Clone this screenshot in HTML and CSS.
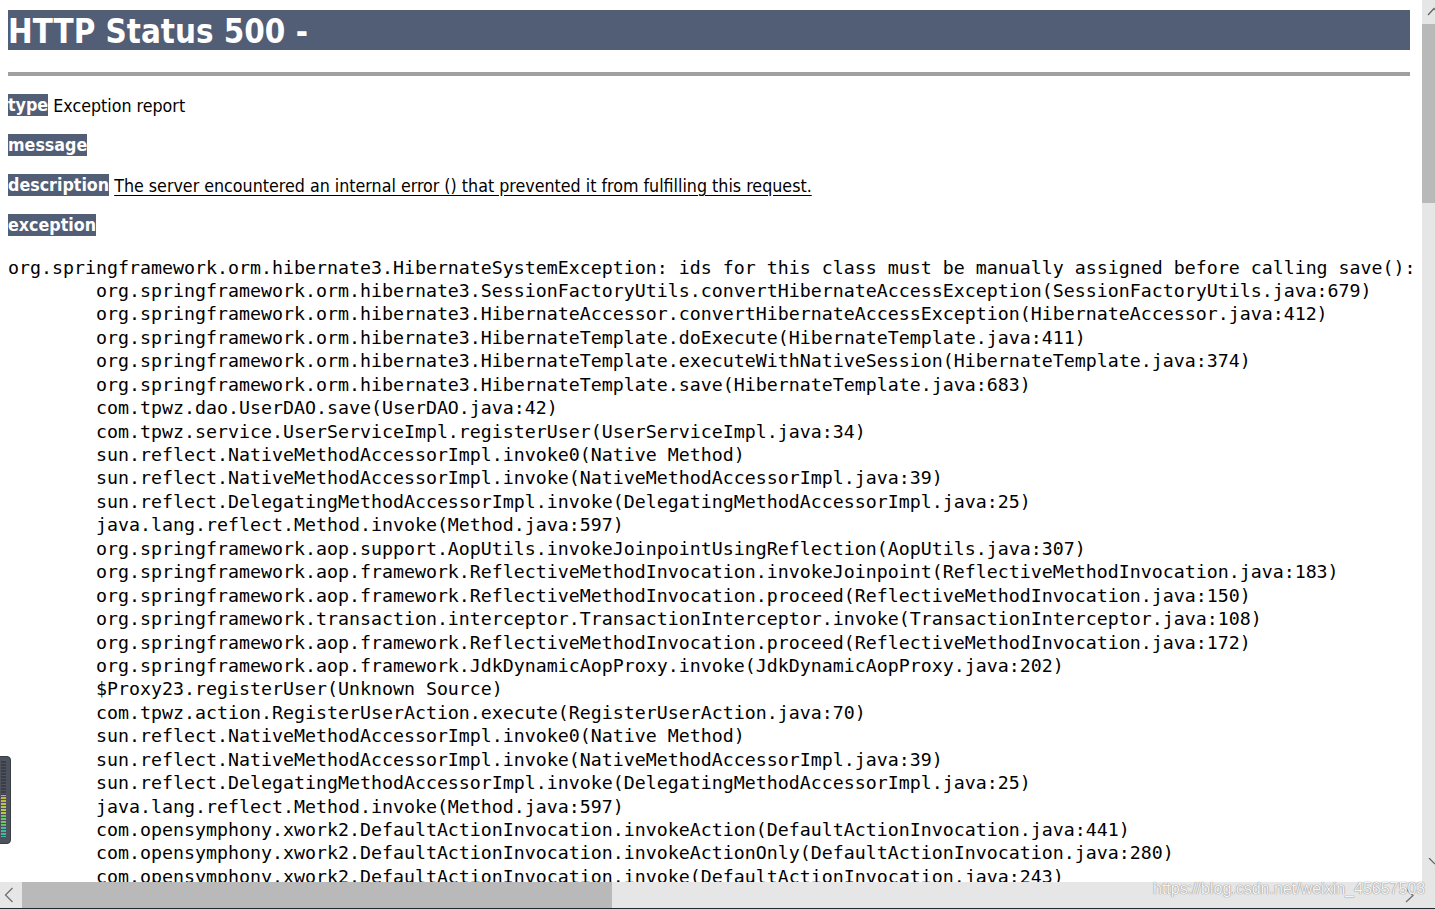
FILE: index.html
```html
<!DOCTYPE html>
<html>
<head>
<meta charset="utf-8">
<title>Apache Tomcat - Error report</title>
<link rel="stylesheet" href="styles.css">
</head>
<body>
<div class="screen">
  <div class="viewport">
    <h1 class="title">HTTP Status 500 - </h1>
    <hr class="rule">
    <p class="row"><b class="label">type</b> Exception report</p>
    <p class="row"><b class="label">message</b> <u></u></p>
    <p class="row"><b class="label">description</b> <u class="desc">The server encountered an internal error () that prevented it from fulfilling this request.</u></p>
    <p class="row"><b class="label">exception</b></p>
<pre class="trace">org.springframework.orm.hibernate3.HibernateSystemException: ids for this class must be manually assigned before calling save(): 
        org.springframework.orm.hibernate3.SessionFactoryUtils.convertHibernateAccessException(SessionFactoryUtils.java:679)
        org.springframework.orm.hibernate3.HibernateAccessor.convertHibernateAccessException(HibernateAccessor.java:412)
        org.springframework.orm.hibernate3.HibernateTemplate.doExecute(HibernateTemplate.java:411)
        org.springframework.orm.hibernate3.HibernateTemplate.executeWithNativeSession(HibernateTemplate.java:374)
        org.springframework.orm.hibernate3.HibernateTemplate.save(HibernateTemplate.java:683)
        com.tpwz.dao.UserDAO.save(UserDAO.java:42)
        com.tpwz.service.UserServiceImpl.registerUser(UserServiceImpl.java:34)
        sun.reflect.NativeMethodAccessorImpl.invoke0(Native Method)
        sun.reflect.NativeMethodAccessorImpl.invoke(NativeMethodAccessorImpl.java:39)
        sun.reflect.DelegatingMethodAccessorImpl.invoke(DelegatingMethodAccessorImpl.java:25)
        java.lang.reflect.Method.invoke(Method.java:597)
        org.springframework.aop.support.AopUtils.invokeJoinpointUsingReflection(AopUtils.java:307)
        org.springframework.aop.framework.ReflectiveMethodInvocation.invokeJoinpoint(ReflectiveMethodInvocation.java:183)
        org.springframework.aop.framework.ReflectiveMethodInvocation.proceed(ReflectiveMethodInvocation.java:150)
        org.springframework.transaction.interceptor.TransactionInterceptor.invoke(TransactionInterceptor.java:108)
        org.springframework.aop.framework.ReflectiveMethodInvocation.proceed(ReflectiveMethodInvocation.java:172)
        org.springframework.aop.framework.JdkDynamicAopProxy.invoke(JdkDynamicAopProxy.java:202)
        $Proxy23.registerUser(Unknown Source)
        com.tpwz.action.RegisterUserAction.execute(RegisterUserAction.java:70)
        sun.reflect.NativeMethodAccessorImpl.invoke0(Native Method)
        sun.reflect.NativeMethodAccessorImpl.invoke(NativeMethodAccessorImpl.java:39)
        sun.reflect.DelegatingMethodAccessorImpl.invoke(DelegatingMethodAccessorImpl.java:25)
        java.lang.reflect.Method.invoke(Method.java:597)
        com.opensymphony.xwork2.DefaultActionInvocation.invokeAction(DefaultActionInvocation.java:441)
        com.opensymphony.xwork2.DefaultActionInvocation.invokeActionOnly(DefaultActionInvocation.java:280)
        com.opensymphony.xwork2.DefaultActionInvocation.invoke(DefaultActionInvocation.java:243)
</pre>
  </div>
  <div class="vscroll">
    <svg class="arrow-up" width="13" height="24" viewBox="0 0 13 24"><path d="M6 15 L12 8.5 L18 15" fill="none" stroke="#606060" stroke-width="1.2"/></svg>
    <div class="vthumb"></div>
    <div class="vtrack"></div>
    <svg class="arrow-down" width="13" height="14" viewBox="0 0 13 14"><path d="M7 0 L13 6" fill="none" stroke="#606060" stroke-width="1.2"/></svg>
  </div>
  <div class="hscroll">
    <svg class="arrow-left" width="22" height="26" viewBox="0 0 22 26"><path d="M12.5 6 L5.5 13 L12.5 20" fill="none" stroke="#707070" stroke-width="1.3"/></svg>
    <div class="hthumb"></div>
    <div class="htrack"></div>
    <svg class="arrow-right" width="22" height="26" viewBox="0 0 22 26"><path d="M8 7 L15 13.5 L8 20" fill="none" stroke="#707070" stroke-width="1.3"/></svg>
  </div>
  <div class="baseline"></div>
  <div class="meter"><div class="meter-bars"></div></div>
  <div class="watermark">https://blog.csdn.net/weixin_45657503</div>
</div>
</body>
</html>
```

FILE: styles.css
```css
html, body {
  margin: 0;
  padding: 0;
  background: #ffffff;
}

.screen {
  position: relative;
  width: 1435px;
  height: 909px;
  overflow: hidden;
  display: grid;
  grid-template-columns: 1422px 13px;
  grid-template-rows: 882px 26px 1px;
}

.viewport {
  grid-column: 1;
  grid-row: 1;
  overflow: hidden;
  padding: 10px 12px 0 8px;
  background: #ffffff;
}

.title {
  box-sizing: border-box;
  margin: 0 0 22px;
  padding-top: 4px;
  background: #525D76;
  color: #ffffff;
  font-family: "DejaVu Sans", Tahoma, sans-serif;
  font-stretch: condensed;
  font-weight: bold;
  font-size: 32.8px;
  line-height: 36px;
  height: 40px;
  white-space: pre;
}

.rule {
  margin: 0 0 18px;
  height: 4px;
  border: none;
  background: #a0a0a0;
}

.row {
  margin: 0 0 18px;
  font-family: "DejaVu Sans", Tahoma, sans-serif;
  font-stretch: condensed;
  font-size: 17.7px;
  line-height: 24px;
  height: 22px;
  color: #000000;
  white-space: nowrap;
}

.label {
  display: inline-block;
  vertical-align: top;
  height: 22px;
  line-height: 23px;
  background: #525D76;
  color: #ffffff;
  font-weight: bold;
}

.desc {
  text-decoration: underline;
  text-underline-offset: 3px;
}

.trace {
  margin: 19.5px 0 0;
  font-family: "DejaVu Sans Mono", Consolas, monospace;
  font-size: 18.27px;
  line-height: 23.44px;
  color: #000000;
  white-space: pre;
  tab-size: 8;
}

.vscroll {
  grid-column: 2;
  grid-row: 1;
  display: flex;
  flex-direction: column;
  background: #e6e6e6;
}

.arrow-up {
  display: block;
  flex: none;
}

.vthumb {
  flex: none;
  height: 179px;
  background: #b9b9b9;
}

.vtrack {
  flex: 1;
}

.arrow-down {
  display: block;
  flex: none;
  margin-bottom: 10px;
}

.hscroll {
  grid-column: 1 / span 2;
  grid-row: 2;
  display: flex;
  align-items: stretch;
  background: #e6e6e6;
}

.arrow-left, .arrow-right {
  display: block;
  flex: none;
}

.hthumb {
  flex: none;
  width: 590px;
  background: #b9b9b9;
}

.htrack {
  flex: 1;
}

.arrow-right {
  margin-right: 15px;
}

.baseline {
  grid-column: 1 / span 2;
  grid-row: 3;
  background: #1f2833;
}

.meter {
  position: absolute;
  left: -6px;
  top: 756px;
  width: 17px;
  height: 88px;
  border-radius: 4px;
  background: #4d525c;
  border: 1px solid #3a3e46;
  box-sizing: border-box;
  padding: 4px 0 0 6px;
}

.meter-bars {
  width: 5px;
  height: 76px;
  background:
    repeating-linear-gradient(to bottom, transparent 0 2px, #4d525c 2px 3px),
    linear-gradient(to bottom, #3a3e46 0 34px, #c9b43c 34px 42px, #b7c64a 42px 54px, #6cc46a 54px 64px, #3fb9a0 64px 76px);
}

.watermark {
  position: absolute;
  left: 1153px;
  top: 879px;
  font-family: "Liberation Sans", Arial, sans-serif;
  font-size: 16px;
  line-height: 20px;
  color: rgba(255, 255, 255, 0.92);
  text-shadow: 0 0 1px #8a8a8a, 0 0 1px #8a8a8a;
  white-space: nowrap;
}
```
